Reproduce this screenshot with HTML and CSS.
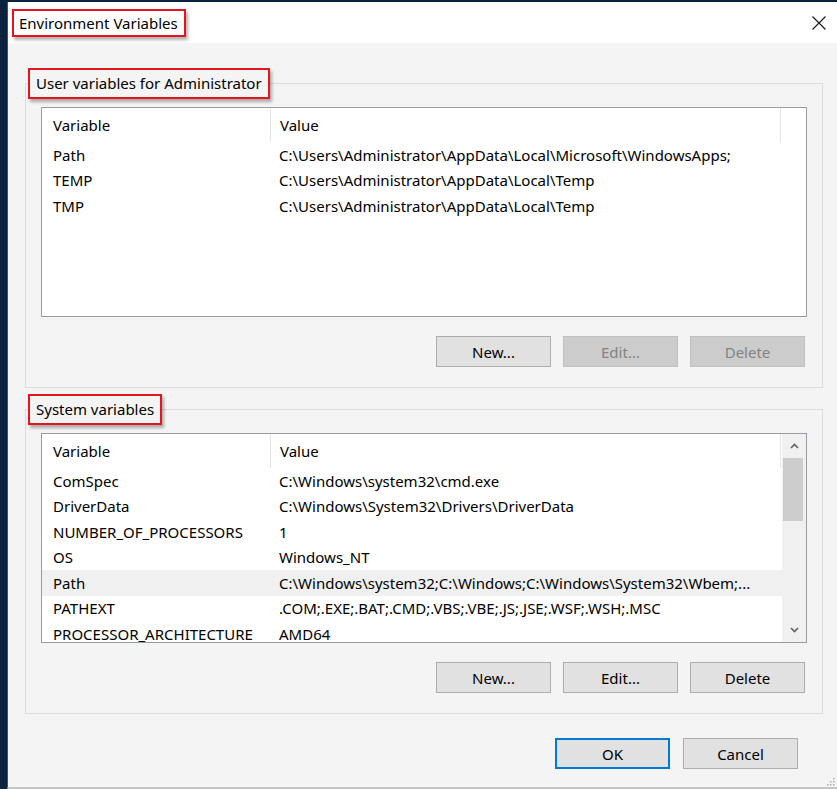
FILE: index.html
```html
<!DOCTYPE html>
<html>
<head>
  <title>Environment Variables</title>
  <link rel="stylesheet" href="styles.css">
</head>
<body>
  <div class="window">
    <div class="titlebar">
      <span class="title mark">Environment Variables</span>
      <span class="close">
        <svg width="14" height="14" viewBox="0 0 14 14"><path d="M0.5 0.5 L13.5 13.5 M13.5 0.5 L0.5 13.5" stroke="#1a1a1a" stroke-width="1.2" fill="none"/></svg>
      </span>
    </div>

    <div class="content">
      <fieldset class="group">
        <legend class="mark">User variables for Administrator</legend>
        <div class="group-body">
          <div class="list">
            <div class="list-main">
              <div class="list-head">
                <div class="col-name">Variable</div>
                <div class="col-value">Value</div>
              </div>
              <div class="row"><div class="col-name">Path</div><div class="col-value">C:\Users\Administrator\AppData\Local\Microsoft\WindowsApps;</div></div>
              <div class="row"><div class="col-name">TEMP</div><div class="col-value">C:\Users\Administrator\AppData\Local\Temp</div></div>
              <div class="row"><div class="col-name">TMP</div><div class="col-value">C:\Users\Administrator\AppData\Local\Temp</div></div>
            </div>
          </div>
          <div class="buttons">
            <button class="btn">New...</button>
            <button class="btn" disabled>Edit...</button>
            <button class="btn" disabled>Delete</button>
          </div>
        </div>
      </fieldset>

      <fieldset class="group group-system">
        <legend class="mark">System variables</legend>
        <div class="group-body">
          <div class="list">
            <div class="list-main">
              <div class="list-head">
                <div class="col-name">Variable</div>
                <div class="col-value">Value</div>
              </div>
              <div class="row"><div class="col-name">ComSpec</div><div class="col-value">C:\Windows\system32\cmd.exe</div></div>
              <div class="row"><div class="col-name">DriverData</div><div class="col-value">C:\Windows\System32\Drivers\DriverData</div></div>
              <div class="row"><div class="col-name">NUMBER_OF_PROCESSORS</div><div class="col-value">1</div></div>
              <div class="row"><div class="col-name">OS</div><div class="col-value">Windows_NT</div></div>
              <div class="row selected"><div class="col-name">Path</div><div class="col-value">C:\Windows\system32;C:\Windows;C:\Windows\System32\Wbem;...</div></div>
              <div class="row"><div class="col-name">PATHEXT</div><div class="col-value">.COM;.EXE;.BAT;.CMD;.VBS;.VBE;.JS;.JSE;.WSF;.WSH;.MSC</div></div>
              <div class="row"><div class="col-name">PROCESSOR_ARCHITECTURE</div><div class="col-value">AMD64</div></div>
            </div>
            <div class="scrollbar">
              <div class="sb-btn">
                <svg width="9" height="6" viewBox="0 0 9 6"><polyline points="1,5 4.5,1.5 8,5" stroke="#606060" stroke-width="1.6" fill="none"/></svg>
              </div>
              <div class="sb-track"><div class="sb-thumb"></div></div>
              <div class="sb-btn">
                <svg width="9" height="6" viewBox="0 0 9 6"><polyline points="1,1 4.5,4.5 8,1" stroke="#606060" stroke-width="1.6" fill="none"/></svg>
              </div>
            </div>
          </div>
          <div class="buttons">
            <button class="btn">New...</button>
            <button class="btn">Edit...</button>
            <button class="btn">Delete</button>
          </div>
        </div>
      </fieldset>

      <div class="footer">
        <button class="btn btn-default">OK</button>
        <button class="btn">Cancel</button>
      </div>
    </div>

    <svg class="grip" width="10" height="10" viewBox="0 0 10 10">
      <rect x="8" y="2" width="1.5" height="1.5" fill="#b0b0b0"/>
      <rect x="5" y="5" width="1.5" height="1.5" fill="#b0b0b0"/>
      <rect x="8" y="5" width="1.5" height="1.5" fill="#b0b0b0"/>
      <rect x="2" y="8" width="1.5" height="1.5" fill="#b0b0b0"/>
      <rect x="5" y="8" width="1.5" height="1.5" fill="#b0b0b0"/>
      <rect x="8" y="8" width="1.5" height="1.5" fill="#b0b0b0"/>
    </svg>
  </div>
</body>
</html>
```

FILE: styles.css
```css
* {
  box-sizing: border-box;
  margin: 0;
  padding: 0;
}

body {
  background-color: #0c2340;
  font-family: "Noto Sans", "Open Sans", sans-serif;
  font-size: 15px;
  color: #000;
  overflow: hidden;
}

.window {
  position: relative;
  margin: 2px 0 0 7px;
  height: 787px;
  background-color: #f4f4f4;
  border-left: 1px solid #35557c;
  border-bottom: 2px solid #c6c6c6;
}

.mark {
  border: 2px solid #e3161f;
  box-shadow: 2px 3px 3px rgba(0, 0, 0, 0.3);
}

/* title bar */
.titlebar {
  display: flex;
  align-items: center;
  justify-content: space-between;
  height: 41px;
  padding: 0 11px 0 4px;
  background-color: #fff;
}

.title {
  height: 28px;
  line-height: 24px;
  padding: 0 6px 0 5px;
}

.close {
  display: flex;
  margin-top: 1px;
}

/* group boxes */
.content {
  padding: 25px 14px 0 17px;
}

.group {
  border: 1px solid #dcdcdc;
  min-width: 0;
}

.group-system {
  margin-top: 6px;
}

.group legend {
  height: 31px;
  line-height: 27px;
  margin-left: 2px;
  padding: 0 6px 0 6px;
}

.group-body {
  padding: 8px 15px 20px 15px;
}

/* list views */
.list {
  display: flex;
  height: 210px;
  background-color: #fff;
  border: 1px solid #9a9ca4;
  overflow: hidden;
}

.list-main {
  flex: 1;
  min-width: 0;
}

.list-head {
  display: flex;
  height: 34px;
  align-items: stretch;
}

.list-head > div {
  display: flex;
  align-items: center;
  border-right: 1px solid #e5e5e5;
}

.row {
  display: flex;
  height: 25.5px;
  align-items: center;
}

.row.selected {
  background-color: #f0f0f0;
}

.col-name {
  width: 229px;
  flex-shrink: 0;
  padding-left: 11px;
  white-space: nowrap;
  overflow: hidden;
}

.col-value {
  width: 510px;
  flex-shrink: 0;
  padding: 0 2px 0 9px;
  white-space: nowrap;
  overflow: hidden;
  text-overflow: ellipsis;
}

.row .col-value {
  padding-left: 8px;
}

/* scrollbar */
.scrollbar {
  width: 24px;
  display: flex;
  flex-direction: column;
  background-color: #f0f0f0;
}

.sb-btn {
  height: 24px;
  display: flex;
  align-items: center;
  justify-content: center;
}

.sb-track {
  flex: 1;
}

.sb-thumb {
  height: 63px;
  margin: 0 3px 0 1px;
  background-color: #cdcdcd;
}

/* buttons */
.buttons {
  display: flex;
  justify-content: flex-end;
  gap: 12px;
  margin-top: 19px;
  padding-right: 2px;
}

.btn {
  width: 115px;
  height: 31px;
  font-family: inherit;
  font-size: 15px;
  color: #000;
  background-color: #e1e1e1;
  border: 1px solid #adadad;
}

.btn:disabled {
  background-color: #cccccc;
  border-color: #bfbfbf;
  color: #838383;
}

.btn-default {
  border: 2px solid #0078d7;
}

.footer {
  display: flex;
  justify-content: flex-end;
  gap: 13px;
  margin-top: 24px;
  padding-right: 25px;
}

.grip {
  position: absolute;
  right: 2px;
  bottom: 1px;
}
```
